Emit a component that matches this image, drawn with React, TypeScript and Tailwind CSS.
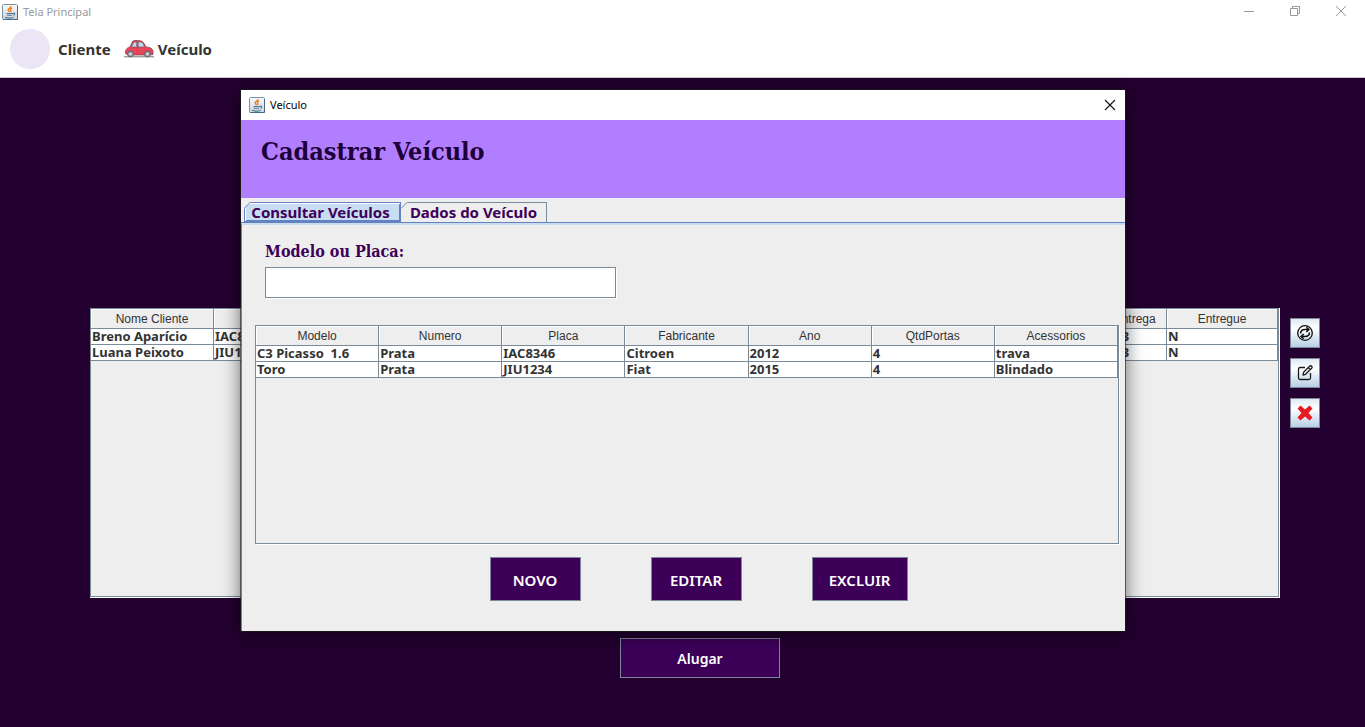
import React from "react";

const VEHICLE_COLUMNS = ["Modelo", "Numero", "Placa", "Fabricante", "Ano", "QtdPortas", "Acessorios"];
const VEHICLES = [
  ["C3 Picasso  1.6", "Prata", "IAC8346", "Citroen", "2012", "4", "trava"],
  ["Toro", "Prata", "JIU1234", "Fiat", "2015", "4", "Blindado"],
];
const RENTALS = [
  ["Breno Aparício", "IAC8346", "10/10/2023", "N"],
  ["Luana Peixoto", "JIU1234", "10/10/2023", "N"],
];

const CELL = "h-4 whitespace-pre border-r border-b border-[#7a8a99] bg-white p-0 pl-px text-left align-middle text-[13px] leading-[15px] font-bold";
const HEAD = "h-5 whitespace-nowrap border-r border-b border-[#7a8a99] p-0 pt-0.5 text-center align-middle font-['Liberation_Sans',sans-serif] text-xs leading-[17px] font-normal shadow-[inset_1px_1px_0_#ffffff]";
const TOOL = "flex size-[30px] items-center justify-center border border-[#7a8a99] bg-linear-to-b from-[#dfe9f4] via-white via-35% to-[#b8cfe5]";
const ACTION = "h-11 border border-[#7a8a99] bg-[#3d0059] pt-0.5 text-center text-[15px] font-semibold text-white";

function JavaIcon() {
  return (
    <svg className="size-4 shrink-0" viewBox="0 0 16 16" fill="none" aria-hidden="true">
      <defs>
        <linearGradient id="tile" x1="0" y1="0" x2="0" y2="1">
          <stop offset="0" stopColor="#f8fafb" />
          <stop offset="1" stopColor="#cbd5dc" />
        </linearGradient>
      </defs>
      <rect x=".5" y=".5" width="15" height="15" rx="1" fill="url(#tile)" stroke="#7893a6" />
      <path d="M15.5 2v13.5H1" stroke="#486b83" />
      <path d="M8.800 2c.6 1.600-2.600 2.200-2.600 3.800 0 1 1 1.500 1.300 2.200M10.300 3.800c-2 .8-2.300 1.600-1.600 2.500.5.600.2 1.200-.2 1.600" stroke="#ed7d21" strokeWidth="1.400" />
      <path d="M4.500 9.500h6.500M5 11.300h5M3 13.300c2.500.9 6.500.8 8.500-.1M11 9.300c2-.7 2.400 1.200.3 1.900" stroke="#4b7896" strokeWidth="1.100" />
    </svg>
  );
}

function CarIcon() {
  return (
    <svg className="h-5 w-[30px] shrink-0" viewBox="0 0 30 20" aria-hidden="true">
      <path d="M0 17.800h30" stroke="#77737d" strokeWidth="1" />
      <path d="M1.500 14.500c-.3-3 .6-5.500 4.500-6.500l2.500-5.500C9 1.700 10 1.500 12 1.500c5 0 6.500.6 8 3l2 3.500c4 .3 7 1.500 7 4.500v3L26 16H4z" fill="#e84658" stroke="#8a4050" strokeWidth=".8" />
      <path d="m7.500 8 2.200-4.700 3-.4V8zM14.200 2.900c3 0 4 .3 5 1.800L20.500 8h-6.300z" fill="#bddbf0" stroke="#6b5365" strokeWidth=".6" />
      <path d="M13.500 8v6" stroke="#b93a4e" strokeWidth=".6" />
      <circle cx="6.500" cy="15" r="2.900" fill="#a6a8af" stroke="#5c5963" />
      <circle cx="23.500" cy="15" r="2.900" fill="#a6a8af" stroke="#5c5963" />
      <circle cx="6.500" cy="15" r="1.100" fill="#e8e8ec" />
      <circle cx="23.500" cy="15" r="1.100" fill="#e8e8ec" />
    </svg>
  );
}

function RefreshIcon() {
  return (
    <svg className="size-[18px]" viewBox="0 0 18 18" fill="none" stroke="#111111" strokeWidth="1.300" aria-hidden="true">
      <circle cx="9" cy="9" r="7.300" />
      <path d="M4.600 9.600C4.600 6.500 6.500 5.600 9 5.600h3M13.400 8.400c0 3.100-1.900 4-4.400 4H6" strokeWidth="1.500" />
      <path d="m10.300 3.300 2.600 2.300-2.600 2.300M7.700 10.100l-2.600 2.300 2.600 2.300" strokeWidth="1.500" />
    </svg>
  );
}

function EditIcon() {
  return (
    <svg className="size-4" viewBox="0 0 16 16" fill="none" stroke="#1c1c1c" strokeWidth="1.300" strokeLinejoin="round" aria-hidden="true">
      <path d="M8 2.500H3A1.500 1.500 0 0 0 1.500 4v9A1.500 1.500 0 0 0 3 14.500h9a1.500 1.500 0 0 0 1.500-1.500V8" />
      <path d="m6 10 .6-2.700 6-6a1.400 1.400 0 0 1 2 2l-6 6zM11.300 2.600l2 2" />
    </svg>
  );
}

function DeleteIcon() {
  return (
    <svg className="size-4" viewBox="0 0 16 16" fill="#e51b20" aria-hidden="true">
      <path d="M3.500.5 8 4.500 12.500.5l3 3L11.500 8l4 4.500-3 3L8 11.500l-4.500 4-3-3L4.500 8 .5 3.500z" />
    </svg>
  );
}

function RentalsTable() {
  return (
    <div className="h-[290px] min-w-0 flex-1 border-r border-b border-white">
      <div className="h-full border border-[#7a8a99] bg-[#eeeeee]">
        <table className="w-full table-fixed border-separate border-spacing-0">
          <colgroup>
            <col className="w-[123px]" />
            <col />
            <col className="w-[109px]" />
            <col className="w-[111px]" />
          </colgroup>
          <thead>
            <tr>
              <th className={HEAD}>Nome Cliente</th>
              <th className={HEAD}></th>
              <th className={HEAD}>Data de Entrega</th>
              <th className={HEAD}>Entregue</th>
            </tr>
          </thead>
          <tbody>
            {RENTALS.map((row) => (
              <tr key={row[0]}>
                {row.map((value, i) => (
                  <td key={i} className={CELL}>{value}</td>
                ))}
              </tr>
            ))}
          </tbody>
        </table>
      </div>
    </div>
  );
}

function VehicleDialog() {
  return (
    <section role="dialog" aria-label="Veículo" className="flex h-[541px] w-[884px] flex-col bg-[#eeeeee] shadow-[0_0_0_1px_rgba(30,30,30,0.600),0_3px_18px_rgba(0,0,0,0.600)]">
      <header className="flex h-[30px] shrink-0 items-center bg-white pb-px pl-2">
        <JavaIcon />
        <span className="ml-[5px] flex-1 pt-px font-['Noto_Sans',sans-serif] text-[11px] text-black">Veículo</span>
        <button aria-label="Fechar" className="mr-[9px] flex size-3 items-center justify-center">
          <svg className="size-3" viewBox="0 0 12 12" stroke="#111111" strokeWidth="1.100"><path d="m1 1 10 10M11 1 1 11" /></svg>
        </button>
      </header>
      <div className="h-[78px] shrink-0 bg-[#b17eff] pt-4 pl-5">
        <h1 className="font-['DejaVu_Serif_Condensed','DejaVu_Serif',serif] text-[25px] leading-8 font-bold text-[#1e0038]">Cadastrar Veículo</h1>
      </div>
      <div role="tablist" className="flex h-[25px] shrink-0 items-end border-b border-[#6382bf] pl-[3px] text-[15px] text-[#3d0059]">
        <button role="tab" aria-selected="true" className="relative h-5 w-[157px] border border-[#6382bf] bg-[#c8ddf2] pr-1 text-center leading-[19px] font-bold shadow-[inset_1px_1px_0_#ffffff,inset_-1px_-1px_0_#6382bf]">
          <svg className="absolute -top-px -left-px size-[7px]" viewBox="0 0 7 7"><path d="M0 0h7L0 7z" fill="#eeeeee" /><path d="M0 6.500 6.500 0" stroke="#6382bf" /></svg>
          Consultar Veículos
        </button>
        <button role="tab" aria-selected="false" className="relative h-5 w-[146px] border-t border-r border-[#7a8a99] text-center leading-[19px] font-bold">
          <svg className="absolute -top-px left-0 size-[7px]" viewBox="0 0 7 7"><path d="M0 0h7L0 7z" fill="#eeeeee" /><path d="M0 6.500 6.500 0" stroke="#7a8a99" /></svg>
          Dados do Veículo
        </button>
      </div>
      <div className="flex flex-1 flex-col border-t-2 border-l border-t-[#c8ddf2] border-l-[#6382bf] pr-1.5 pl-[13px]">
        <div className="ml-[10px] flex w-[352px] flex-col pt-[17px]">
          <label htmlFor="busca" className="font-['DejaVu_Serif_Condensed','DejaVu_Serif',serif] text-base leading-5 font-bold text-[#3d0059]">Modelo ou Placa:</label>
          <input id="busca" type="text" className="mt-[5px] h-[31px] w-[351px] border border-[#7a8a99] bg-white px-1 text-sm shadow-[1px_1px_0_#ffffff] outline-none" />
        </div>
        <div className="mt-[27px] h-[219px] border border-[#7a8a99] shadow-[1px_1px_0_#ffffff]">
          <table className="w-full table-fixed border-separate border-spacing-0">
            <thead>
              <tr>{VEHICLE_COLUMNS.map((name) => <th key={name} className={HEAD}>{name}</th>)}</tr>
            </thead>
            <tbody>
              {VEHICLES.map((row) => (
                <tr key={row[0]}>{row.map((value, i) => <td key={i} className={CELL}>{value}</td>)}</tr>
              ))}
            </tbody>
          </table>
        </div>
        <div className="mt-[13px] flex justify-center gap-[70px] pl-[23px]">
          <button className={`${ACTION} w-[91px]`}>NOVO</button>
          <button className={`${ACTION} w-[91px]`}>EDITAR</button>
          <button className={`${ACTION} w-24`}>EXCLUIR</button>
        </div>
      </div>
    </section>
  );
}

export default function App() {
  return (
    <div className="relative flex min-h-screen flex-col bg-[#240030] font-['Noto_Sans','Open_Sans',sans-serif] text-[#333333]">
      <header className="flex h-[78px] shrink-0 flex-col border-b border-[#cccccc] bg-white">
        <div className="flex h-[23px] items-center pl-0.5">
          <JavaIcon />
          <span className="ml-[5px] flex-1 pt-px text-[11px] text-[#999999]">Tela Principal</span>
          <div className="flex h-5 items-center gap-9 pr-[19px] pb-0.5">
            <button aria-label="Minimizar" className="size-[10px]"><svg className="size-[10px]" viewBox="0 0 10 10" stroke="#999999"><path d="M0 5.500h10" /></svg></button>
            <button aria-label="Restaurar" className="size-[10px]"><svg className="size-[10px]" viewBox="0 0 10 10" fill="none" stroke="#999999"><path d="M.5 2.500h7v7h-7zM2.500 2.500v-2h7v7h-2" /></svg></button>
            <button aria-label="Fechar janela" className="size-[10px]"><svg className="size-[10px]" viewBox="0 0 10 10" stroke="#999999"><path d="m0 0 10 10M10 0 0 10" /></svg></button>
          </div>
        </div>
        <nav className="flex items-center pt-1.5 pl-[10px] text-[15px] font-bold">
          <button className="flex items-center gap-2"><span className="size-10 rounded-full bg-[#ebe5f5]" />Cliente</button>
          <button className="ml-[13px] flex items-center gap-1"><CarIcon />Veículo</button>
        </nav>
      </header>
      <main className="flex flex-1 flex-col pt-[230px]">
        <div className="flex gap-[10px] pr-[45px] pl-[90px]">
          <RentalsTable />
          <div className="flex flex-col gap-[10px] pt-[10px]">
            <button aria-label="Atualizar" className={TOOL}><RefreshIcon /></button>
            <button aria-label="Editar aluguel" className={TOOL}><EditIcon /></button>
            <button aria-label="Excluir aluguel" className={TOOL}><DeleteIcon /></button>
          </div>
        </div>
        <div className="flex justify-center pt-10 pl-[35px]">
          <button className="h-10 w-40 border border-[#7a8a99] bg-[#3d0059] pt-0.5 text-sm font-semibold text-white">Alugar</button>
        </div>
      </main>
      <div className="absolute inset-x-0 top-[90px] flex justify-center pl-px">
        <VehicleDialog />
      </div>
    </div>
  );
}
